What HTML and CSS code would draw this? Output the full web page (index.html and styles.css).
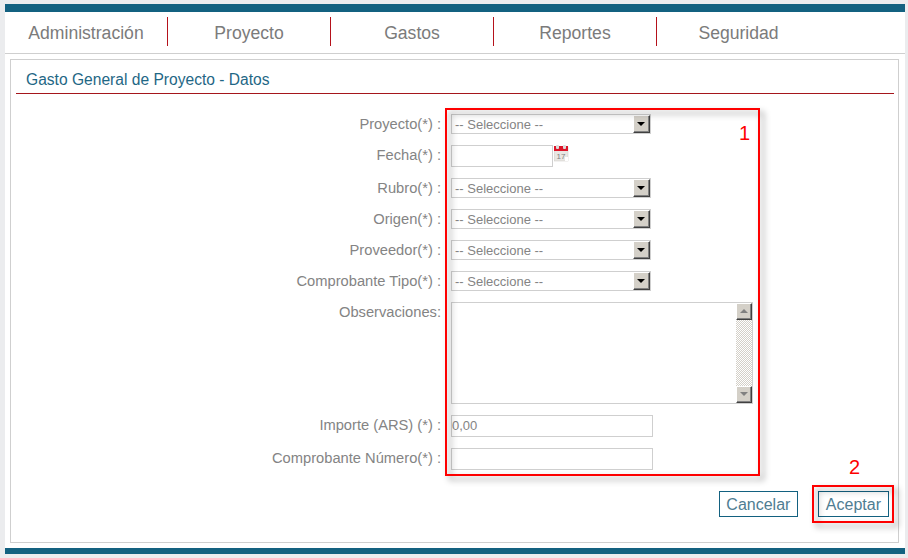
FILE: index.html
```html
<!DOCTYPE html>
<html lang="es">

<head>
    <meta charset="UTF-8">
    <title>Gasto General de Proyecto</title>
    <link rel="stylesheet" href="styles.css">
</head>

<body>
    <div class="wrapper">
        <nav class="menu">
            <a href="#">Administración</a>
            <a href="#">Proyecto</a>
            <a href="#">Gastos</a>
            <a href="#">Reportes</a>
            <a href="#">Seguridad</a>
        </nav>
        <div class="panel">
            <h2>Gasto General de Proyecto - Datos</h2>
            <form class="form">
                <label>Proyecto(*) :</label>
                <div class="combo"><span>-- Seleccione --</span><i class="arrow"></i></div>

                <label class="up1">Fecha(*) :</label>
                <div class="date">
                    <input type="text" class="short">
                    <svg width="15" height="17" viewBox="0 0 15 17">
                        <rect x="0.5" y="2" width="13.5" height="14" fill="#e9e7e3" stroke="#c9c7c1" stroke-width="0.5"/>
                        <rect x="0" y="1" width="14" height="5" fill="#dc1428"/>
                        <rect x="2" y="0" width="3" height="4" rx="1" fill="#dcdcdc"/>
                        <rect x="9" y="0" width="3" height="4" rx="1" fill="#dcdcdc"/>
                        <text x="2.5" y="14" class="cal-day">17</text>
                        <rect x="11" y="12" width="3" height="4" fill="#fff"/>
                    </svg>
                </div>

                <label>Rubro(*) :</label>
                <div class="combo"><span>-- Seleccione --</span><i class="arrow"></i></div>

                <label>Origen(*) :</label>
                <div class="combo"><span>-- Seleccione --</span><i class="arrow"></i></div>

                <label>Proveedor(*) :</label>
                <div class="combo"><span>-- Seleccione --</span><i class="arrow"></i></div>

                <label>Comprobante Tipo(*) :</label>
                <div class="combo"><span>-- Seleccione --</span><i class="arrow"></i></div>

                <label class="top">Observaciones:</label>
                <div class="memo">
                    <textarea></textarea>
                    <div class="scroll">
                        <i class="scroll-btn"><b class="up"></b></i>
                        <i class="scroll-track"></i>
                        <i class="scroll-btn"><b class="down"></b></i>
                    </div>
                </div>

                <label class="up1">Importe (ARS) (*) :</label>
                <input type="text" class="long" value="0,00">

                <label class="up1">Comprobante Número(*) :</label>
                <input type="text" class="long">
            </form>
            <div class="buttons">
                <button type="button" class="cancel">Cancelar</button>
                <button type="button">Aceptar</button>
            </div>
        </div>
        <div class="mark mark-form"></div>
        <div class="mark mark-btn"></div>
        <span class="num num-1">1</span>
        <span class="num num-2">2</span>
    </div>
</body>

</html>
```

FILE: styles.css
```css
* {
    box-sizing: border-box;
}

body {
    margin: 0;
    height: 558px;
    overflow: hidden;
    background-color: #ebecee;
    font-family: "Liberation Sans", Arial, sans-serif;
    padding: 4px 3px 4px 5px;
}

.wrapper {
    position: relative;
    height: 550px;
    background-color: #fff;
    border-top: 8px solid #136180;
    border-bottom: 6px solid #136180;
}

.menu {
    display: flex;
    height: 42px;
    padding-top: 5px;
    border-bottom: 1px solid #cfcfcf;
}

.menu a {
    width: 163px;
    height: 29px;
    line-height: 33px;
    text-align: center;
    font-size: 17.6px;
    color: #7b7b7b;
    text-decoration: none;
    border-right: 1px solid #b5121b;
}

.menu a:last-child {
    border-right: none;
}

.panel {
    margin: 5px 6px 0 5px;
    height: 484px;
    padding: 0 4px 0 5px;
    border: 1px solid #cfcfcf;
}

h2 {
    margin: 0 0 20px;
    height: 34px;
    padding: 11px 10px 0;
    font-size: 15.6px;
    font-weight: normal;
    color: #1f6785;
    border-bottom: 1px solid #a5161c;
}

.form {
    display: grid;
    grid-template-columns: 425px 302px;
    column-gap: 10px;
    row-gap: 11px;
    align-items: center;
    justify-items: start;
}

label {
    justify-self: end;
    font-size: 14.7px;
    color: #848484;
    margin-top: -1px;
}

label.up1 {
    margin-top: -3px;
}

label.top {
    align-self: start;
    margin-top: 2px;
}

.combo {
    display: flex;
    justify-content: space-between;
    width: 200px;
    height: 20px;
    border: 1px solid #cfcfcf;
    font-size: 13px;
    line-height: 20px;
    color: #848484;
    padding-left: 3px;
}

.arrow {
    position: relative;
    width: 17px;
    height: 18px;
    background-color: #d4d0c8;
    border-top: 1px solid #fff;
    border-left: 1px solid #fff;
    border-right: 1px solid #404040;
    border-bottom: 1px solid #404040;
    box-shadow: inset -1px -1px 0 #808080;
}

.arrow::after {
    content: "";
    position: absolute;
    left: 3px;
    top: 6px;
    border-left: 4px solid transparent;
    border-right: 4px solid transparent;
    border-top: 4px solid #000;
}

input {
    height: 22px;
    border: 1px solid #cfcfcf;
    font-family: "Liberation Sans", Arial, sans-serif;
    font-size: 13px;
    color: #848484;
    padding: 0 0 2px 0;
}

.short {
    width: 102px;
}

.long {
    width: 202px;
}

.date {
    display: flex;
    align-items: flex-start;
    gap: 1px;
}

.cal-day {
    font-family: "Liberation Sans", Arial, sans-serif;
    font-size: 8px;
    fill: #808080;
}

.memo {
    display: flex;
    width: 302px;
    height: 102px;
    border: 1px solid #cfcfcf;
}

textarea {
    flex: 1;
    border: none;
    resize: none;
    overflow: hidden;
}

.scroll {
    display: flex;
    flex-direction: column;
    width: 16px;
}

.scroll-btn {
    position: relative;
    height: 17px;
    background-color: #d4d0c8;
    border-top: 1px solid #fff;
    border-left: 1px solid #fff;
    border-right: 1px solid #404040;
    border-bottom: 1px solid #404040;
    box-shadow: inset -1px -1px 0 #808080;
}

.scroll-btn b {
    position: absolute;
    left: 3px;
    top: 5px;
    border-left: 4px solid transparent;
    border-right: 4px solid transparent;
}

.up {
    border-bottom: 4px solid #808080;
}

.down {
    border-top: 4px solid #808080;
}

.scroll-track {
    flex: 1;
    background-color: #fff;
    background-image: conic-gradient(#d4d0c8 25%, #fff 0 50%, #d4d0c8 0 75%, #fff 0);
    background-size: 2px 2px;
}

.buttons {
    display: flex;
    justify-content: flex-end;
    gap: 20px;
    margin-top: 21px;
    padding-right: 5px;
}

button {
    height: 26px;
    padding: 1px 7px 0;
    background-color: #fff;
    border: 1px solid #136180;
    font-family: "Liberation Sans", Arial, sans-serif;
    font-size: 16px;
    color: #4f7d92;
}

.cancel {
    width: 79px;
    padding: 1px 0 0;
}

/* red marks over the page */
.mark {
    position: absolute;
    border: 2px solid #fe0000;
    filter: drop-shadow(4px 4px 3px rgba(0, 0, 0, 0.4));
}

.mark-form {
    left: 440px;
    top: 96px;
    width: 315px;
    height: 368px;
}

.mark-btn {
    left: 807px;
    top: 473px;
    width: 82px;
    height: 38px;
}

.num {
    position: absolute;
    font-size: 20px;
    color: #fe0000;
}

.num-1 {
    left: 734px;
    top: 110px;
}

.num-2 {
    left: 844px;
    top: 444px;
}
```
